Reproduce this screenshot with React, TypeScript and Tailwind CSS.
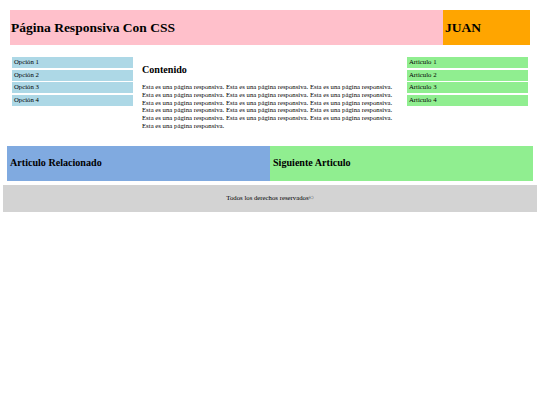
const opciones = ["Opción 1", "Opción 2", "Opción 3", "Opción 4"];
const articulos = ["Articulo 1", "Articulo 2", "Articulo 3", "Articulo 4"];
const frase = "Esta es una página responsiva.";

export default function App() {
  const parrafo = Array(16).fill(frase).join(" ");
  return (
    <div className="min-h-[405px] w-[540px] bg-white pt-[10px] font-['Liberation_Serif','Times_New_Roman',serif] text-black">
      {/* cabecera */}
      <header className="mx-[10px] flex h-[35px]">
        <div className="flex flex-1 items-center bg-[#ffc0cb] pl-[1px]">
          <h1 className="text-[13.5px] font-bold leading-none">Página Responsiva Con CSS</h1>
        </div>
        <div className="flex w-[87px] items-center bg-[#ffa500] pl-[2px]">
          <h1 className="text-[13.5px] font-bold leading-none">JUAN</h1>
        </div>
      </header>

      {/* cuerpo */}
      <div className="mt-[12px] flex h-[89px] text-[6.75px]">
        <nav className="ml-[12px] flex w-[121px] flex-col gap-[1.5px]">
          {opciones.map((o) => (
            <div key={o} className="flex h-[11px] items-center bg-[#add8e6] pl-[2px]">
              {o}
            </div>
          ))}
        </nav>
        <main className="ml-[9px] w-[255px]">
          <h2 className="mt-[7px] text-[10.1px] font-bold leading-[12px]">Contenido</h2>
          <p className="mt-[7px] leading-[7.8px]">{parrafo}</p>
        </main>
        <aside className="ml-auto mr-[12px] flex w-[121px] flex-col gap-[1.5px]">
          {articulos.map((a) => (
            <div key={a} className="flex h-[11px] items-center bg-[#90ee90] pl-[2px]">
              {a}
            </div>
          ))}
        </aside>
      </div>

      {/* relacionados */}
      <section className="mx-[7px] flex h-[35px]">
        <div className="flex w-[263px] items-center bg-[#80aae0] pl-[3px]">
          <h2 className="text-[10.1px] font-bold leading-none">Articulo Relacionado</h2>
        </div>
        <div className="flex flex-1 items-center bg-[#90ee90] pl-[3px]">
          <h2 className="text-[10.1px] font-bold leading-none">Siguiente Articulo</h2>
        </div>
      </section>

      <footer className="mx-[3px] mt-[4px] flex h-[27px] items-center justify-center bg-[#d3d3d3] text-[6.75px]">
        Todos los derechos reservados©
      </footer>
    </div>
  );
}
